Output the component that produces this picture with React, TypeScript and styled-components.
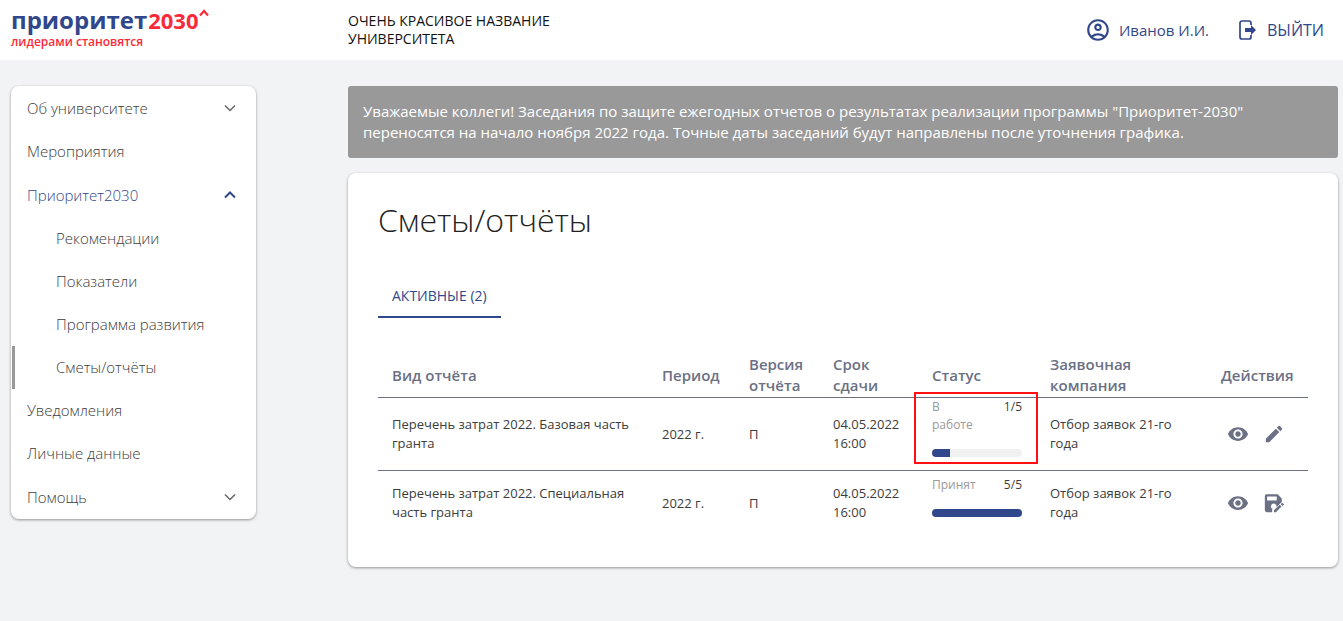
import React from "react";
import styled, { createGlobalStyle } from "styled-components";
import { MdEdit, MdOutlineAccountCircle, MdVisibility } from "react-icons/md";

const color = {
  brand: "#31478b",
  red: "#fb2a3b",
  muted: "#6b7085",
  text: "#3c3c3c",
  page: "#f2f3f5",
};

const GlobalStyle = createGlobalStyle`
  *, *::before, *::after { box-sizing: border-box; }
  body {
    margin: 0;
    min-height: 100vh;
    background: ${color.page};
    color: ${color.text};
    font-family: "Open Sans", "Noto Sans", sans-serif;
    font-size: 13px;
  }
  a { color: inherit; text-decoration: none; }
  button { font: inherit; color: inherit; background: none; border: 0; padding: 0; cursor: pointer; }
`;

const columns = "245px minmax(0, 1fr)";

const Header = styled.header`
  display: grid;
  grid-template-columns: ${columns};
  column-gap: 92px;
  align-items: center;
  height: 60px;
  padding: 0 19px 0 11px;
  background: #fff;
`;

const Logo = styled.a`
  display: flex;
  flex-direction: column;
  padding-bottom: 4px;
  font-weight: 700;
  color: ${color.red};
`;

const LogoName = styled.span`
  display: flex;
  align-items: baseline;
  gap: 1px;
  font-size: 24px;
  line-height: 28px;
  color: ${color.brand};
`;

const LogoYear = styled.span`
  display: flex;
  align-items: flex-start;
  font-size: 22px;
  line-height: 22px;
  color: ${color.red};
`;

const Tagline = styled.span`
  font-size: 12px;
  font-weight: 600;
  line-height: 16px;
`;

const HeaderMain = styled.div`
  display: flex;
  align-items: center;
  justify-content: space-between;
`;

const University = styled.div`
  width: 230px;
  font-size: 14px;
  line-height: 18px;
  color: #111;
`;

const UserArea = styled.div`
  display: flex;
  align-items: center;
  gap: 30px;
  color: ${color.brand};
`;

const UserButton = styled.button`
  display: flex;
  align-items: center;
  gap: 8px;
  font-size: 15px;
`;

const ExitButton = styled(UserButton)`
  gap: 10px;
  font-size: 16px;
`;

const Body = styled.div`
  display: grid;
  grid-template-columns: ${columns};
  column-gap: 92px;
  align-items: start;
  padding: 26px 5px 26px 11px;
`;

const Card = styled.div`
  background: #fff;
  border-radius: 8px;
  box-shadow: 0 1px 3px rgba(0, 0, 0, 0.4);
`;

const Nav = styled(Card).attrs({ as: "nav" })`
  display: flex;
  flex-direction: column;
  font-size: 15px;
  font-weight: 300;
`;

const NavItem = styled.a<{ $nested?: boolean; $current?: boolean }>`
  display: flex;
  align-items: center;
  height: 43px;
  margin-left: 1px;
  padding: 0 0 2px ${(p) => (p.$nested ? 41 : 12)}px;
  border-left: 3px solid ${(p) => (p.$current ? "#999" : "transparent")};
`;

const NavGroup = styled.button<{ $open?: boolean }>`
  display: flex;
  align-items: center;
  justify-content: space-between;
  height: 44px;
  padding: 0 20px 0 16px;
  color: ${(p) => (p.$open ? color.brand : color.text)};
  svg {
    color: ${(p) => (p.$open ? color.brand : "#666")};
  }
`;

const Main = styled.main`
  display: flex;
  flex-direction: column;
  gap: 15px;
`;

const Notice = styled.p`
  margin: 0;
  padding: 15px 90px 15px 15px;
  border-radius: 3px;
  background: #999;
  color: #fff;
  font-size: 15px;
  line-height: 21px;
`;

const Panel = styled(Card).attrs({ as: "section" })`
  padding: 25px 30px 32px;
`;

const Title = styled.h1`
  margin: 0;
  font-size: 32px;
  font-weight: 300;
  line-height: 44px;
  color: #222;
`;

const Tabs = styled.div`
  display: flex;
  margin-top: 33px;
`;

const Tab = styled.button`
  height: 43px;
  padding: 0 14px;
  border-bottom: 2px solid ${color.brand};
  color: ${color.brand};
  font-size: 14px;
`;

const Table = styled.table`
  width: 100%;
  margin-top: 35px;
  border-collapse: separate;
  border-spacing: 0;
  table-layout: fixed;
`;

const Col = styled.col<{ $width?: number }>`
  width: ${(p) => (p.$width ? `${p.$width}px` : "auto")};
`;

const HeadCell = styled.th`
  height: 45px;
  padding: 0 14px;
  border-bottom: 1px solid ${color.muted};
  color: ${color.muted};
  font-size: 15px;
  font-weight: 600;
  line-height: 21px;
  text-align: left;
`;

const Row = styled.tr<{ $last?: boolean }>`
  height: ${(p) => (p.$last ? 64 : 73)}px;
  td {
    border-bottom: ${(p) => (p.$last ? "0" : `1px solid ${color.muted}`)};
  }
`;

const Cell = styled.td`
  padding: 0 14px;
  line-height: 19px;
`;

const CompanyCell = styled(Cell)`
  padding-right: 30px;
`;

const StatusCell = styled(Cell)`
  position: relative;
  font-size: 12px;
  line-height: 18px;
`;

const StatusText = styled.div`
  display: flex;
  justify-content: space-between;
`;

const StatusLabel = styled.span`
  max-width: 46px;
  color: #999;
`;

const Progress = styled.div`
  height: 8px;
  margin: 15px 0 13px;
  border-radius: 4px;
  background: #f1f1f1;
  overflow: hidden;
`;

const ProgressFill = styled.div`
  height: 100%;
  background: ${color.brand};
`;

const Highlight = styled.span`
  position: absolute;
  inset: -6px -2px 6px -4px;
  border: 2px solid #f11;
  pointer-events: none;
`;

const Actions = styled.div`
  display: flex;
  gap: 14px;
  padding-left: 6px;
  color: ${color.muted};
`;

const IconButton = styled.button`
  display: flex;
`;

function ExitIcon() {
  return (
    <svg width="18" height="20" viewBox="0 0 18 20" fill="none" aria-hidden="true">
      <path d="M12 5V3a2 2 0 0 0-2-2H3a2 2 0 0 0-2 2v14a2 2 0 0 0 2 2h7a2 2 0 0 0 2-2v-2" stroke="currentColor" strokeWidth="1.700" />
      <path d="M6 8h6V5l5 5-5 5v-3H6z" fill="currentColor" />
    </svg>
  );
}

function Chevron({ up }: { up?: boolean }) {
  return (
    <svg width="12" height="8" viewBox="0 0 12 8" fill="none" aria-hidden="true">
      <path d={up ? "M1 6.500 6 1.500l5 5" : "M1 1.500l5 5 5-5"} stroke="currentColor" strokeWidth={up ? 2 : 1.5} />
    </svg>
  );
}

function SaveEditIcon({ size }: { size: number }) {
  return (
    <svg width={size} height={size} viewBox="0 0 24 24" fill="currentColor" aria-hidden="true">
      <path
        d="M4 2.500h12l4.500 4.500v3.800l-6.200 6.200a3 3 0 1 0-3.800 1.400l-.5.500V22H4a2 2 0 0 1-2-2V4.500a2 2 0 0 1 2-2zM4.500 5v4.200h10.500V5z"
        fillRule="evenodd"
      />
      <path d="M12 19.900V22h2.100l6.100-6.100-2.100-2.100zM22.700 13.400l-1.300-1.300a.6.6 0 0 0-.8 0l-1.300 1.200 2.100 2.100 1.300-1.200a.6.6 0 0 0 0-.8z" />
    </svg>
  );
}

const reports = [
  { name: "Перечень затрат 2022. Базовая часть гранта", status: "В работе", step: 1, edit: "Редактировать", Icon: MdEdit, marked: true },
  { name: "Перечень затрат 2022. Специальная часть гранта", status: "Принят", step: 5, edit: "Сохранить изменения", Icon: SaveEditIcon, marked: false },
];

const headings = ["Вид отчёта", "Период", "Версия отчёта", "Срок сдачи", "Статус", "Заявочная компания", "Действия"];

export default function App() {
  return (
    <>
      <GlobalStyle />
      <Header>
        <Logo href="#">
          <LogoName>
            приоритет
            <LogoYear>
              2030
              <svg width="10" height="8" viewBox="0 0 10 8" fill="none" aria-hidden="true">
                <path d="M1 6.500 5 2l4 4.500" stroke="currentColor" strokeWidth="2.200" />
              </svg>
            </LogoYear>
          </LogoName>
          <Tagline>лидерами становятся</Tagline>
        </Logo>
        <HeaderMain>
          <University>ОЧЕНЬ КРАСИВОЕ НАЗВАНИЕ УНИВЕРСИТЕТА</University>
          <UserArea>
            <UserButton>
              <MdOutlineAccountCircle size={26} />
              Иванов И.И.
            </UserButton>
            <ExitButton>
              <ExitIcon />
              ВЫЙТИ
            </ExitButton>
          </UserArea>
        </HeaderMain>
      </Header>
      <Body>
        <Nav>
          <NavGroup>
            Об университете
            <Chevron />
          </NavGroup>
          <NavItem href="#">Мероприятия</NavItem>
          <NavGroup $open aria-expanded>
            Приоритет2030
            <Chevron up />
          </NavGroup>
          <NavItem href="#" $nested>Рекомендации</NavItem>
          <NavItem href="#" $nested>Показатели</NavItem>
          <NavItem href="#" $nested>Программа развития</NavItem>
          <NavItem href="#" $nested $current aria-current="page">Сметы/отчёты</NavItem>
          <NavItem href="#">Уведомления</NavItem>
          <NavItem href="#">Личные данные</NavItem>
          <NavGroup>
            Помощь
            <Chevron />
          </NavGroup>
        </Nav>
        <Main>
          <Notice>
            Уважаемые коллеги! Заседания по защите ежегодных отчетов о результатах реализации программы "Приоритет-2030"
            переносятся на начало ноября 2022 года. Точные даты заседаний будут направлены после уточнения графика.
          </Notice>
          <Panel>
            <Title>Сметы/отчёты</Title>
            <Tabs role="tablist">
              <Tab role="tab" aria-selected>АКТИВНЫЕ (2)</Tab>
            </Tabs>
            <Table>
              <colgroup>
                <Col />
                <Col $width={87} />
                <Col $width={84} />
                <Col $width={99} />
                <Col $width={118} />
                <Col $width={171} />
                <Col $width={101} />
              </colgroup>
              <thead>
                <tr>
                  {headings.map((h) => (
                    <HeadCell key={h} scope="col">{h}</HeadCell>
                  ))}
                </tr>
              </thead>
              <tbody>
                {reports.map((r, i) => (
                  <Row key={r.name} $last={i === reports.length - 1}>
                    <Cell>{r.name}</Cell>
                    <Cell>2022 г.</Cell>
                    <Cell>П</Cell>
                    <Cell>04.05.2022 16:00</Cell>
                    <StatusCell>
                      <StatusText>
                        <StatusLabel>{r.status}</StatusLabel>
                        <span>{r.step}/5</span>
                      </StatusText>
                      <Progress>
                        <ProgressFill style={{ width: `${r.step * 20}%` }} />
                      </Progress>
                      {r.marked && <Highlight />}
                    </StatusCell>
                    <CompanyCell>Отбор заявок 21-го года</CompanyCell>
                    <Cell>
                      <Actions>
                        <IconButton aria-label="Просмотр"><MdVisibility size={22} /></IconButton>
                        <IconButton aria-label={r.edit}><r.Icon size={22} /></IconButton>
                      </Actions>
                    </Cell>
                  </Row>
                ))}
              </tbody>
            </Table>
          </Panel>
        </Main>
      </Body>
    </>
  );
}
